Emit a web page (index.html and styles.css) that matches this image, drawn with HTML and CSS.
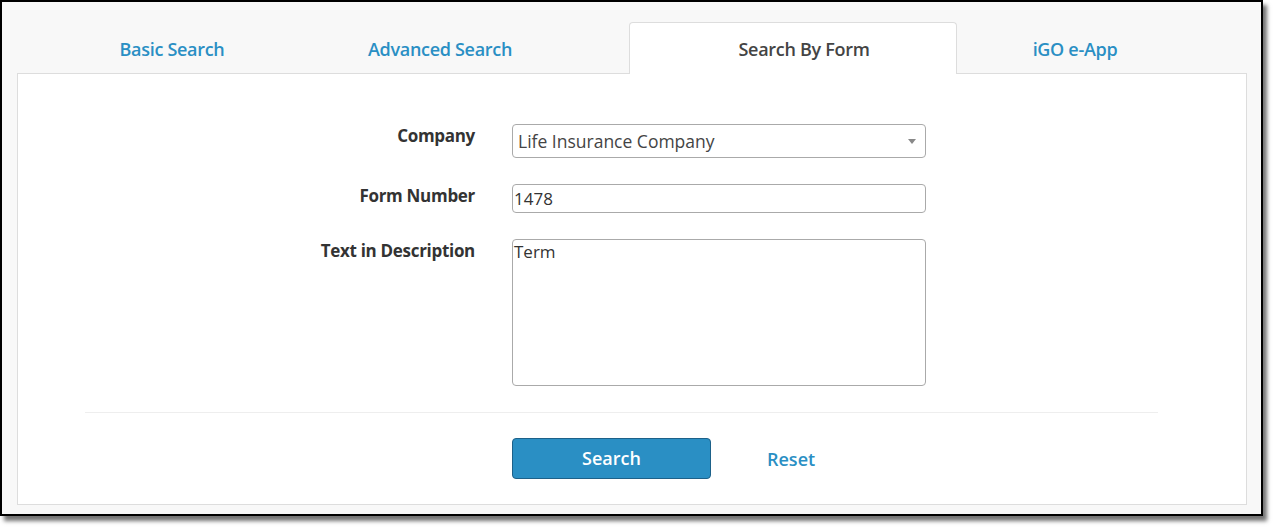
FILE: index.html
```html
<!DOCTYPE html>
<html>
<head>
<meta charset="utf-8">
<link rel="stylesheet" href="styles.css">
</head>
<body>
<div class="frame">
  <ul class="tabs">
    <li class="tab tab-basic"><a href="#">Basic Search</a></li>
    <li class="tab tab-adv"><a href="#">Advanced Search</a></li>
    <li class="tab tab-form active"><a href="#">Search By Form</a></li>
    <li class="tab tab-igo"><a href="#">iGO e-App</a></li>
  </ul>
  <div class="panel">
    <form class="form">
      <div class="row">
        <label class="label">Company</label>
        <div class="select">
          <span class="select-text">Life Insurance Company</span>
          <span class="select-arrow"></span>
        </div>
      </div>
      <div class="row">
        <label class="label">Form Number</label>
        <input class="input" type="text" value="1478">
      </div>
      <div class="row">
        <label class="label">Text in Description</label>
        <textarea class="textarea">Term</textarea>
      </div>
      <div class="divider"></div>
      <div class="actions">
        <button type="button" class="btn">Search</button>
        <a href="#" class="reset">Reset</a>
      </div>
    </form>
  </div>
</div>
</body>
</html>
```

FILE: styles.css
```css
* { box-sizing: border-box; }
html, body { margin: 0; padding: 0; background: #fff; }
body { font-family: "Open Sans", "Liberation Sans", sans-serif; color: #333; height: 531px; }

.frame {
  width: 1263px;
  height: 516px;
  border: 2px solid #000;
  background: #f8f8f8;
  box-shadow: 4px 5px 4px rgba(0,0,0,0.55);
  padding: 20px 14px 9px 15px;
  display: flex;
  flex-direction: column;
}

.tabs {
  list-style: none;
  margin: 0 0 -1px 0;
  padding: 0;
  display: flex;
  height: 52px;
  position: relative;
  z-index: 1;
}
.tab {
  height: 52px;
  display: flex;
  align-items: center;
  justify-content: center;
  padding-top: 0;
  border: 1px solid transparent;
  border-bottom: none;
  border-radius: 4px 4px 0 0;
}
.tab a {
  color: #2a8fc4;
  font-weight: 600;
  font-size: 18px;
  text-decoration: none;
  letter-spacing: -0.3px;
}
.tab-basic { width: 310px; }
.tab-adv { width: 226px; margin-right: 76px; }
.tab-form { width: 328px; padding-left: 22px; }
.tab-igo { width: 236px; }
.tab.active {
  background: #fff;
  border-color: #ddd;
}
.tab.active a { color: #444; }

.panel {
  flex: 1;
  background: #fff;
  border: 1px solid #ddd;
  padding: 50px 0 0 67px;
}

.form { width: 1073px; }
.row {
  display: grid;
  grid-template-columns: 390px 414px;
  column-gap: 37px;
  margin-bottom: 26px;
}
.label {
  text-align: right;
  font-weight: 700;
  font-size: 17px;
  color: #333;
  line-height: 22px;
  padding-top: 1px;
  letter-spacing: -0.3px;
}
.select {
  height: 34px;
  border: 1px solid #aaa;
  border-radius: 4px;
  display: flex;
  align-items: center;
  justify-content: space-between;
  padding: 0 9px 0 5px;
}
.select-text { font-size: 17.5px; color: #444; }
.select-arrow {
  width: 0; height: 0;
  border-left: 4px solid transparent;
  border-right: 4px solid transparent;
  border-top: 5px solid #888;
}
.input, .textarea {
  font-family: "Open Sans", "Liberation Sans", sans-serif;
  font-size: 17px;
  color: #333;
  border: 1px solid #aaa;
  border-radius: 4px;
  padding: 0 1px;
  margin: 0;
  outline: none;
  background: #fff;
}
.input { height: 29px; }
.textarea {
  height: 147px;
  resize: none;
  line-height: 24px;
  padding-top: 0;
}
.divider {
  height: 1px;
  background: #eee;
  margin: 0 0 25px 0;
}
.actions {
  display: flex;
  align-items: center;
  padding-left: 427px;
}
.btn {
  width: 199px;
  height: 41px;
  background: #2a8fc4;
  border: 1px solid #1d6189;
  border-radius: 4px;
  color: #fff;
  font-family: "Open Sans", "Liberation Sans", sans-serif;
  font-weight: 600;
  font-size: 18px;
  cursor: pointer;
  padding: 0 0 2px 0;
}
.reset {
  margin-left: 56px;
  color: #2a8fc4;
  font-weight: 600;
  font-size: 18px;
  text-decoration: none;
}
```
